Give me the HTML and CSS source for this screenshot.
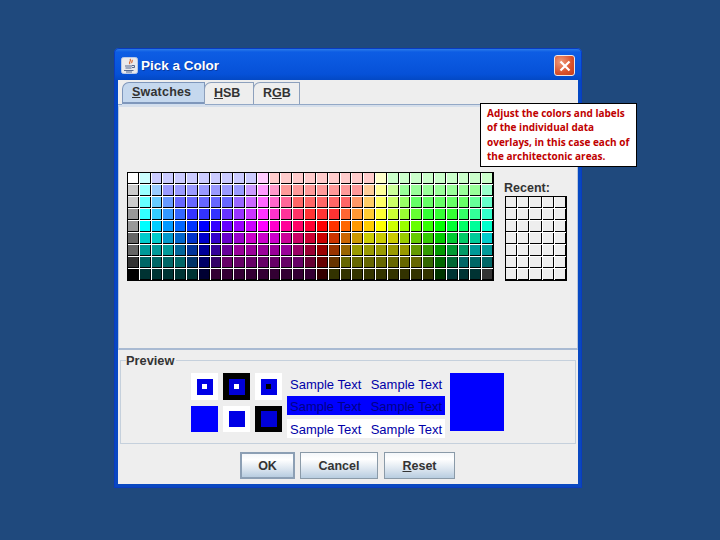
FILE: index.html
```html
<!DOCTYPE html>
<html lang="en">
<head>
<meta charset="utf-8">
<title>Pick a Color</title>
<link rel="stylesheet" href="styles.css">
</head>
<body>
<div class="window">
  <header class="titlebar">
    <svg class="appicon" viewBox="0 0 17 17" width="17" height="17">
      <rect x="0.5" y="0.5" width="16" height="16" rx="2" fill="#e9e9ec" stroke="#b9c8e6"/>
      <path d="M9 2c2 2-2 3 0 5M11 3c1 1-1 2 0 3" fill="none" stroke="#d8632a" stroke-width="1.2"/>
      <path d="M4 9h7M4.500 11h6M3 13.500h9.500M5 15h6" fill="none" stroke="#55688f" stroke-width="1.100"/>
      <path d="M11 8.500h2.500v2h-2.500" fill="none" stroke="#55688f"/>
    </svg>
    <span class="title">Pick a Color</span>
    <button class="close" aria-label="Close">
      <svg viewBox="0 0 12 12" width="12" height="12"><path d="M1.500 1.500l9 9M10.500 1.500l-9 9" stroke="#fff" stroke-width="2.200" fill="none"/></svg>
    </button>
  </header>
  <div class="content">
    <nav class="tabs">
      <span class="tab active"><u>S</u>watches</span>
      <span class="tab hsb"><u>H</u>SB</span>
      <span class="tab rgb">R<u>G</u>B</span>
    </nav>
    <section class="panel">
      <div class="swatches" id="main"></div>
      <div class="recent">
        <div class="recent-label">Recent:</div>
        <div class="recent-grid" id="recent"></div>
      </div>
    </section>
    <fieldset class="preview">
      <legend>Preview</legend>
      <div class="squares">
        <div class="sq white"><i class="b"><i class="dot w"></i></i></div>
        <div class="sq black"><i class="b glow"><i class="dot w"></i></i></div>
        <div class="sq white"><i class="b"><i class="dot k"></i></i></div>
        <div class="sq blue"></div>
        <div class="sq white"><i class="b"></i></div>
        <div class="sq black"><i class="b glow"></i></div>
      </div>
      <div class="samples">
        <div class="row"><span>Sample Text</span><span>Sample Text</span></div>
        <div class="row on-blue"><span>Sample Text</span><span>Sample Text</span></div>
        <div class="row on-white"><span>Sample Text</span><span>Sample Text</span></div>
      </div>
      <div class="big"></div>
    </fieldset>
    <footer class="buttons">
      <button class="btn ok">OK</button>
      <button class="btn cancel">Cancel</button>
      <button class="btn reset"><u>R</u>eset</button>
    </footer>
  </div>
  <aside class="note">Adjust the colors and labels of the individual data overlays, in this case each of the architectonic areas.</aside>
</div>
<script src="swatches.js"></script>
</body>
</html>
```
FILE: styles.css
```css
* { box-sizing: border-box; }
html, body { margin: 0; height: 100%; }
body {
  background: #1f497d;
  font-family: "Liberation Sans", Arial, sans-serif;
  padding: 48px 0 0 114px;
  overflow: hidden;
}
.window {
  position: relative;
  width: 468px;
  height: 440px;
  background: linear-gradient(#3585ea, #0d5de4 4px, #0651d8 26px, #0348c4 32px, #0a48c0);
  border-radius: 5px 5px 0 0;
  padding: 0 4px 4px;
  display: flex;
  flex-direction: column;
  box-shadow: 0 0 0 1px #0a3cc0 inset;
}
.titlebar {
  height: 32px;
  flex: none;
  display: flex;
  align-items: center;
  padding: 3px 0 0 3px;
  color: #fff;
}
.appicon { flex: none; }
.title {
  font: bold 13.500px "Liberation Sans", Arial, sans-serif;
  margin-left: 3px;
  color: #fff;
  text-shadow: 1px 1px 0 #0a3aa0;
}
.close {
  margin-left: auto;
  margin-right: 3px;
  width: 21px;
  height: 21px;
  padding: 0;
  display: flex;
  align-items: center;
  justify-content: center;
  background: radial-gradient(circle at 30% 30%, #ef9a78, #d9512c 60%, #c43d1c);
  border: 1px solid #f1e6e2;
  border-radius: 3px;
}
.content {
  flex: 1;
  min-height: 0;
  background: #eeeeee;
  display: flex;
  flex-direction: column;
}
.tabs {
  height: 25px;
  flex: none;
  display: flex;
  align-items: flex-end;
  padding: 0 0 0 4px;
  border-bottom: 1px solid #93a8c6;
}
.tab {
  height: 22px;
  font: bold 12.500px/20px "Liberation Sans", Arial, sans-serif;
  color: #333;
  border: 1px solid #8da0bc;
  border-bottom: 0;
  border-radius: 7px 0 0 0;
  margin-right: -1px;
}
.tab.active {
  background: #c5d8ee;
  border: 1px solid #7f97bb;
  border-bottom: 2px solid #7f97bb;
  width: 83px;
  line-height: 19px;
  padding: 0 0 0 9px;
  letter-spacing: 0.2px;
  box-shadow: 0 2px 0 #d0deef;
}
.tab.hsb { width: 50px; padding-left: 9px; }
.tab.rgb { width: 47px; padding-left: 9px; }
.panel {
  height: 245px;
  flex: none;
  display: flex;
  align-items: flex-start;
  padding: 65px 0 0 8px;
  border: 1px solid #b8c6da;
  border-top: 2px solid #d6dfeb;
  border-bottom: 2px solid #a9bad2;
}
.swatches, .recent-grid {
  display: grid;
  gap: 1px;
  background: #fff;
  border: 1px solid #000;
}
.swatches {
  width: 367px;
  height: 109px;
  grid-template-columns: repeat(31, 1fr);
  grid-template-rows: repeat(9, 1fr);
}
.recent { margin-left: 11px; margin-top: 8px; }
.recent-label {
  font: bold 12.500px/16px "Liberation Sans", Arial, sans-serif;
  color: #333;
  margin-left: -1px;
}
.recent-grid {
  width: 62px;
  height: 85px;
  grid-template-columns: repeat(5, 1fr);
  grid-template-rows: repeat(7, 1fr);
}
.cell {
  border-right: 1px solid #000;
  border-bottom: 1px solid #000;
}
.recent-grid .cell { background: #eeeeee; }
.preview {
  margin: 3px 2px 0;
  height: 91px;
  border: 1px solid #c5d0dc;
  padding: 0;
  display: flex;
  align-items: flex-start;
}
.preview legend {
  font: bold 12.800px/15px "Liberation Sans", Arial, sans-serif;
  color: #333;
  padding: 0 2px 0 0;
  margin-left: 5px;
}
.squares {
  margin: 5px 0 0 70px;
  width: 91px;
  display: grid;
  grid-template-columns: repeat(3, 27px);
  grid-template-rows: 27px 26px;
  column-gap: 5px;
  row-gap: 6px;
  flex: none;
}
.sq { display: flex; align-items: center; justify-content: center; }
.sq.white { background: #fff; }
.sq.black { background: #000; }
.sq.blue { background: #0000ff; }
.b { display: flex; align-items: center; justify-content: center; background: #0000e6; width: 16px; height: 16px; }
.b.glow { background: #0000d8; }
.dot { width: 5px; height: 5px; }
.w { background: #fff; }
.k { background: #000; }
.samples {
  margin: 6px 0 0 5px;
  width: 158px;
  flex: none;
  font: 13px/19px "Liberation Sans", Arial, sans-serif;
  color: #0000a8;
}
.row {
  height: 19px;
  margin-bottom: 3px;
  display: flex;
  justify-content: space-between;
  padding: 1px 3px 0;
  white-space: nowrap;
}
.on-blue { background: #0000ff; color: #000088; margin-bottom: 4px; }
.on-white { background: #fff; }
.big {
  width: 54px;
  height: 58px;
  background: #0000ff;
  margin: 5px 0 0 5px;
  flex: none;
}
.buttons {
  flex: 1;
  display: flex;
  padding: 8px 0 0 122px;
  gap: 5px;
}
.btn {
  height: 27px;
  padding: 0;
  font: bold 12.500px "Liberation Sans", Arial, sans-serif;
  color: #333;
  background: linear-gradient(#f4f7fa, #ffffff 25%, #dbe5ef 65%, #b8cde0);
  border: 1px solid #8a9aa8;
}
.ok { width: 55px; border-width: 2px; border-color: #8c9fb4; }
.cancel { width: 78px; }
.reset { width: 71px; margin-left: 1px; }
.note {
  position: absolute;
  left: 366px;
  top: 55px;
  width: 157px;
  height: 64px;
  background: #fff;
  border: 1px solid #000;
  padding: 2px 4px 0 6px;
  font: bold 10px/14.300px "Open Sans", Lato, sans-serif;
  color: #c00000;
}
```
FILE: swatches.js
```js
// Swing's default swatch table, run-length encoded: [r, g, b, count]
var rows = [
  [[255,255,255],[204,255,255],[204,204,255,9],[255,204,255],[255,204,204,9],[255,255,204],[204,255,204,9]],
  [[204,204,204],[153,255,255],[153,204,255],[153,153,255,7],[204,153,255],[255,153,255],[255,153,204],[255,153,153,7],[255,204,153],[255,255,153],[204,255,153],[153,255,153,7],[153,255,204]],
  [[204,204,204],[102,255,255],[102,204,255],[102,153,255],[102,102,255,5],[153,102,255],[204,102,255],[255,102,255],[255,102,204],[255,102,153],[255,102,102,5],[255,153,102],[255,204,102],[255,255,102],[204,255,102],[153,255,102],[102,255,102,5],[102,255,153],[102,255,204]],
  [[153,153,153],[51,255,255],[51,204,255],[51,153,255],[51,102,255],[51,51,255,3],[102,51,255],[153,51,255],[204,51,255],[255,51,255],[255,51,204],[255,51,153],[255,51,102],[255,51,51,3],[255,102,51],[255,153,51],[255,204,51],[255,255,51],[204,255,51],[153,255,51],[102,255,51],[51,255,51,3],[51,255,102],[51,255,153],[51,255,204]],
  [[153,153,153],[0,255,255],[0,204,255],[0,153,255],[0,102,255],[0,51,255],[0,0,255],[51,0,255],[102,0,255],[153,0,255],[204,0,255],[255,0,255],[255,0,204],[255,0,153],[255,0,102],[255,0,51],[255,0,0],[255,51,0],[255,102,0],[255,153,0],[255,204,0],[255,255,0],[204,255,0],[153,255,0],[102,255,0],[51,255,0],[0,255,0],[0,255,51],[0,255,102],[0,255,153],[0,255,204]],
  [[102,102,102],[0,204,204,2],[0,153,204],[0,102,204],[0,51,204],[0,0,204],[51,0,204],[102,0,204],[153,0,204],[204,0,204,3],[204,0,153],[204,0,102],[204,0,51],[204,0,0],[204,51,0],[204,102,0],[204,153,0],[204,204,0,3],[153,204,0],[102,204,0],[51,204,0],[0,204,0],[0,204,51],[0,204,102],[0,204,153],[0,204,204]],
  [[102,102,102],[0,153,153,3],[0,102,153],[0,51,153],[0,0,153],[51,0,153],[102,0,153],[153,0,153,5],[153,0,102],[153,0,51],[153,0,0],[153,51,0],[153,102,0],[153,153,0,5],[102,153,0],[51,153,0],[0,153,0],[0,153,51],[0,153,102],[0,153,153,2]],
  [[51,51,51],[0,102,102,4],[0,51,102],[0,0,102],[51,0,102],[102,0,102,7],[102,0,51],[102,0,0],[102,51,0],[102,102,0,7],[51,102,0],[0,102,0],[0,102,51],[0,102,102,3]],
  [[0,0,0],[0,51,51,5],[0,0,51],[51,0,51,9],[51,0,0],[51,51,0,9],[0,51,0],[0,51,51,3],[51,51,51]]
];
var main = document.getElementById('main');
rows.forEach(function (row) {
  row.forEach(function (c) {
    for (var i = 0; i < (c[3] || 1); i++) {
      var d = document.createElement('div');
      d.className = 'cell';
      d.style.background = 'rgb(' + c[0] + ',' + c[1] + ',' + c[2] + ')';
      main.appendChild(d);
    }
  });
});
var recent = document.getElementById('recent');
for (var n = 0; n < 35; n++) {
  var d = document.createElement('div');
  d.className = 'cell';
  recent.appendChild(d);
}
```
